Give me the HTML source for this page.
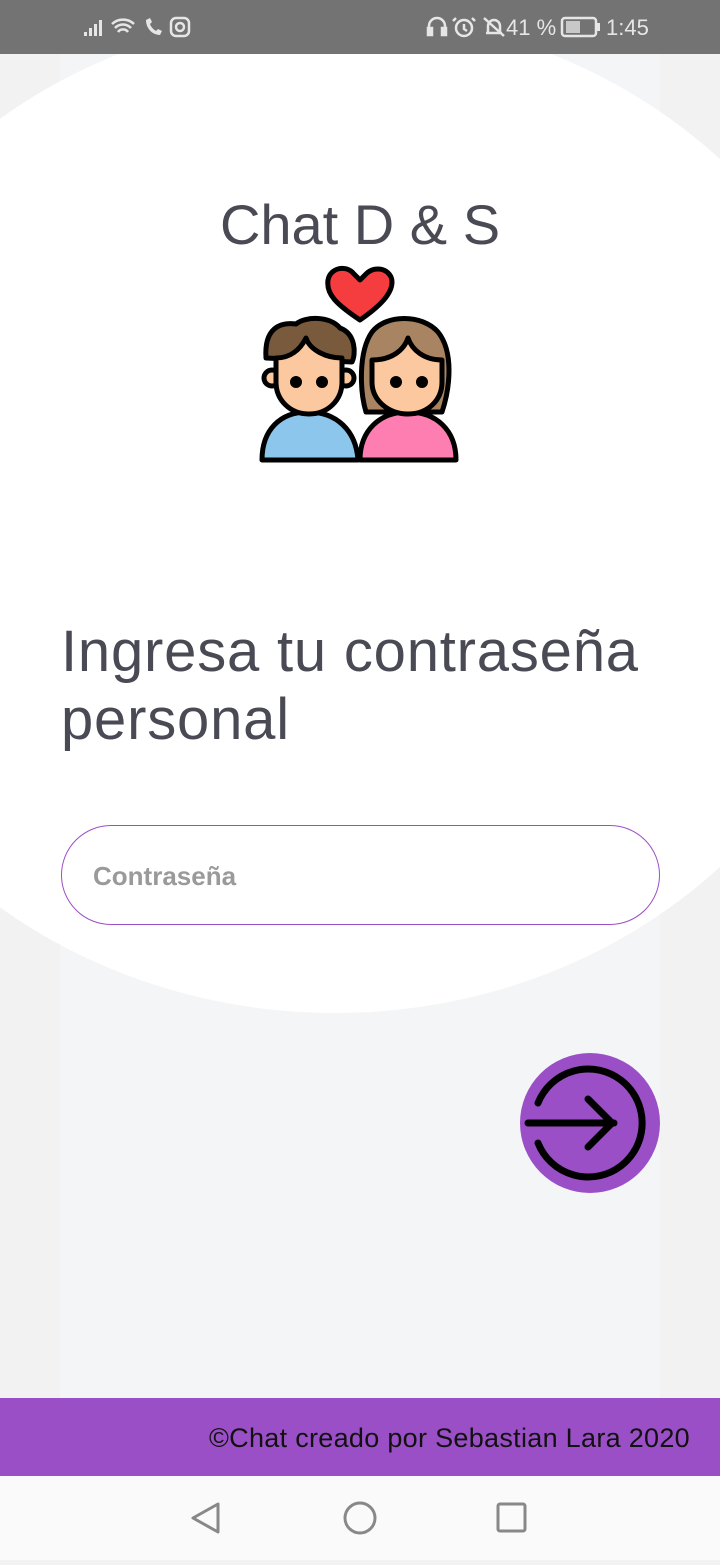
<!DOCTYPE html>
<html><head><meta charset="utf-8"><style>
*{margin:0;padding:0;box-sizing:border-box}
body{width:720px;height:1560px;overflow:hidden;background:#f2f2f2;font-family:"Liberation Sans",Roboto,sans-serif;position:relative}
.inner{position:absolute;left:60px;top:54px;width:600px;height:1344px;background:#f4f5f7}
.ell{position:absolute;left:-210px;top:13px;width:1090px;height:1000px;border-radius:50%;background:#fff}
.status{position:absolute;left:0;top:0;width:720px;height:54px;background:#737373;color:#e6e6e6;font-size:22px}
.title{position:absolute;top:192px;width:720px;text-align:center;font-size:56px;color:#4a4a55}
.h{position:absolute;left:61px;top:618px;font-size:58px;line-height:68px;color:#4a4a55;letter-spacing:0.8px}
.inp{position:absolute;left:61px;top:825px;width:599px;height:100px;border:1.5px solid #9b4fc7;border-radius:50px;background:#fff}
.inp span{position:absolute;left:31px;top:35px;font-size:26px;font-weight:bold;color:#9a9a9a}
.btn{position:absolute;left:520px;top:1053px;width:140px;height:140px;border-radius:50%;background:#9b4fc7}
.foot{position:absolute;left:0;top:1398px;width:720px;height:78px;background:#9b4fc7;color:#111;font-size:27px}
.foot span{position:absolute;right:30px;top:25px;letter-spacing:0.3px}
.nav{position:absolute;left:0;top:1476px;width:720px;height:84px;background:#fafafa}
</style></head><body>
<div class="inner"></div>
<div class="ell"></div>
<div class="status">
<svg width="720" height="54" style="position:absolute;left:0;top:0" fill="none" stroke="#e6e6e6" stroke-width="2.5">
<g fill="#e6e6e6" stroke="none"><rect x="84" y="32" width="3" height="4"/><rect x="89" y="28" width="3" height="8"/><rect x="94" y="24" width="3" height="12"/><rect x="99" y="20" width="3" height="16"/></g>
<path d="M112 24a16 16 0 0 1 22 0M115 28a11 11 0 0 1 16 0M118 32a6 6 0 0 1 10 0"/>
<path d="M146 20c0 8 6 15 14 15l2-4-4-2-2 2c-3-2-5-4-6-7l2-2-2-4z" fill="#e6e6e6" stroke="none"/>
<rect x="171" y="18" width="18" height="18" rx="5"/><circle cx="180" cy="27" r="4"/>
<path d="M429 32v-6a8 8 0 0 1 16 0v6"/><rect x="428" y="28" width="4" height="7" fill="#e6e6e6"/><rect x="442" y="28" width="4" height="7" fill="#e6e6e6"/>
<circle cx="464" cy="28" r="8"/><path d="M464 24v5l3 2M456 18l-3 3M472 18l3 3"/>
<path d="M486 33h16M488 33v-7a6 6 0 0 1 12 0v7M484 18l20 18"/>
<rect x="562" y="18" width="34" height="18" rx="3"/><rect x="566" y="21" width="14" height="12" fill="#c8c8c8" stroke="none"/><rect x="597" y="23" width="3" height="8" fill="#e6e6e6" stroke="none"/>
</svg>
<span style="position:absolute;left:506px;top:15px">41 %</span>
<span style="position:absolute;left:606px;top:15px">1:45</span>
</div>
<div class="title">Chat D &amp; S</div>
<svg style="position:absolute;left:258px;top:262px" width="204" height="202" viewBox="0 0 204 202" stroke="#000" stroke-width="5" stroke-linejoin="round">
<path d="M102 58C78 42 68 32 70 18c2-12 18-16 26-6l6 6 6-6c10-10 26-4 26 8 0 12-12 24-32 38z" fill="#f53c3f"/>
<path d="M4 198c0-30 18-48 46-48s48 18 50 48z" fill="#8cc6ec"/>
<path d="M102 198c0-30 20-48 48-48s48 18 48 48z" fill="#ff7eb1"/>
<path d="M108 150c-6-20-8-60 6-80 14-18 50-18 66 0 16 20 12 56 4 80z" fill="#a88463"/>
<path d="M8 96c-2-30 14-36 30-34 10-8 34-8 44 4 16 6 16 26 12 34z" fill="#7a5a3d"/>
<circle cx="14" cy="116" r="8" fill="#fcc8a0"/><circle cx="88" cy="116" r="8" fill="#fcc8a0"/>
<path d="M18 96v24c0 18 14 32 33 32s33-14 33-32v-24c-16 0-32-8-36-20-6 12-16 20-30 20z" fill="#fcc8a0"/>
<path d="M114 98v22c0 18 16 32 36 32s34-14 34-32v-22c-18 0-30-10-34-22-4 12-16 22-36 22z" fill="#fcc8a0"/>
<circle cx="38" cy="120" r="3.5" fill="#000"/><circle cx="64" cy="120" r="3.5" fill="#000"/>
<circle cx="138" cy="120" r="3.5" fill="#000"/><circle cx="164" cy="120" r="3.5" fill="#000"/>
</svg>
<div class="h">Ingresa tu contraseña<br>personal</div>
<div class="inp"><span>Contraseña</span></div>
<div class="btn"><svg width="140" height="140" viewBox="0 0 140 140" fill="none" stroke="#000" stroke-width="7" stroke-linecap="round" stroke-linejoin="round">
<path d="M18 50A54 54 0 1 1 18 90"/><path d="M8 70h86M68 46l24 24-24 24"/></svg></div>
<div class="foot"><span>©Chat creado por Sebastian Lara 2020</span></div>
<div class="nav"><svg width="720" height="84" fill="none" stroke="#888" stroke-width="3">
<path d="M218 28L193 42L218 56Z" stroke-linejoin="round"/><circle cx="360" cy="42" r="15"/><rect x="498" y="28" width="27" height="27" rx="2"/></svg></div>
</body></html>
